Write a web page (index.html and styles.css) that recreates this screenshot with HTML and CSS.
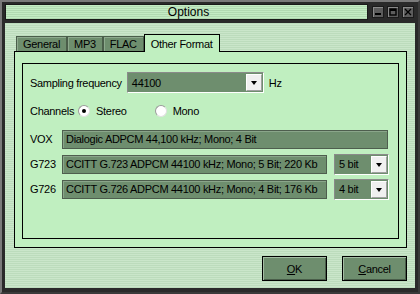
FILE: index.html
```html
<!DOCTYPE html>
<html lang="en">
  <head>
    <meta charset="UTF-8" />
    <title>Options</title>
    <link rel="stylesheet" href="styles.css">
  </head>
  <body>
    <div class="window">
      <div class="titlebar">
        <div class="title">Options</div>
        <div class="ctrls">
          <span class="ctrl"><svg width="8" height="8" viewBox="0 0 8 8"><rect x="1" y="5" width="6" height="2" fill="#000"/></svg></span>
          <span class="ctrl"><svg width="8" height="8" viewBox="0 0 8 8"><rect x="1" y="1" width="6" height="6" fill="none" stroke="#000" stroke-width="1.4"/><rect x="1" y="1" width="6" height="2" fill="#000"/></svg></span>
          <span class="ctrl"><svg width="8" height="8" viewBox="0 0 8 8"><path d="M1 1L7 7M7 1L1 7" stroke="#000" stroke-width="1.3"/></svg></span>
        </div>
      </div>

      <div class="body">
        <div class="tabs">
          <span class="tab">General</span>
          <span class="tab">MP3</span>
          <span class="tab">FLAC</span>
          <span class="tab active">Other Format</span>
        </div>

        <div class="panel">
          <div class="group">
            <div class="row row-freq">
              <span class="lbl">Sampling frequency</span>
              <span class="combo combo-freq">
                <span class="combo-val">44100</span>
                <span class="arrow"></span>
              </span>
              <span class="lbl">Hz</span>
            </div>

            <div class="row row-chan">
              <span class="lbl">Channels</span>
              <span class="radio checked"></span>
              <span class="lbl opt">Stereo</span>
              <span class="radio"></span>
              <span class="lbl">Mono</span>
            </div>

            <div class="row row-fmt">
              <span class="lbl code">VOX</span>
              <span class="field field-wide">Dialogic ADPCM 44,100 kHz; Mono; 4 Bit</span>
            </div>

            <div class="row row-fmt">
              <span class="lbl code">G723</span>
              <span class="field">CCITT G.723 ADPCM 44100 kHz; Mono; 5 Bit; 220 Kb</span>
              <span class="combo combo-bit">
                <span class="combo-val">5 bit</span>
                <span class="arrow"></span>
              </span>
            </div>

            <div class="row row-fmt">
              <span class="lbl code">G726</span>
              <span class="field">CCITT G.726 ADPCM 44100 kHz; Mono; 4 Bit; 176 Kb</span>
              <span class="combo combo-bit">
                <span class="combo-val">4 bit</span>
                <span class="arrow"></span>
              </span>
            </div>
          </div>
        </div>

        <div class="buttons">
          <button><u>O</u>K</button>
          <button><u>C</u>ancel</button>
        </div>
      </div>
    </div>
  </body>
</html>
```

FILE: styles.css
```css
/* General */
body {
  margin: 0;
  background: #1c1c1c;
  font-family: "Liberation Sans", Arial, sans-serif;
  font-size: 11px;
  letter-spacing: -0.3px;
  color: #000;
}

/* Window frame */
.window {
  width: 420px;
  height: 294px;
  box-sizing: border-box;
  border: 2px solid #7a7a7a;
  border-right-color: #3a3a3a;
  border-bottom-color: #3a3a3a;
  background: #2a2a2a;
  padding: 2px 3px 4px 3px;
  display: flex;
  flex-direction: column;
}

/* Title bar */
.titlebar {
  display: flex;
  align-items: center;
  height: 16px;
  gap: 4px;
  margin-bottom: 3px;
}

.title {
  flex: 1;
  height: 16px;
  box-sizing: border-box;
  border: 1px solid #1a1a1a;
  background: repeating-linear-gradient(#c4ecc4 0 1px, #b2dab2 1px 2px);
  text-align: center;
  line-height: 14px;
  font-size: 12px;
  letter-spacing: 0;
  padding-left: 4px;
}

.ctrls {
  display: flex;
  gap: 3px;
  padding-right: 1px;
}

.ctrl {
  width: 12px;
  height: 12px;
  box-sizing: border-box;
  border: 1px solid #1a1a1a;
  background: #5c5c5c;
  box-shadow: inset 1px 1px 0 #8a8a8a;
  display: flex;
  align-items: center;
  justify-content: center;
}

/* Body */
.body {
  flex: 1;
  background: repeating-linear-gradient(#bcdcbc 0 1px, #cae6ca 1px 2px);
  padding: 11px 8px 0 9px;
  display: flex;
  flex-direction: column;
}

/* Tabs */
.tabs {
  display: flex;
  align-items: flex-end;
  padding-left: 2px;
  height: 17px;
}

.tab {
  height: 14px;
  line-height: 15px;
  padding: 0 6px;
  background: #6e8e6e;
  border: 1px solid #4a5e4a;
  border-bottom: none;
  box-shadow: inset 1px 1px 0 #8eaa8e;
}

.tab.active {
  height: 17px;
  line-height: 19px;
  background: #c0efc0;
  border: 1px solid #000;
  border-bottom: none;
  box-shadow: none;
  position: relative;
  top: 1px;
  z-index: 1;
}

.panel {
  height: 197px;
  box-sizing: border-box;
  background: #c0efc0;
  border: 1px solid #000;
  padding: 11px 7px 0 7px;
}

.group {
  height: 176px;
  box-sizing: border-box;
  border: 1px solid #000;
  padding: 8px 0 0 7px;
}

/* Rows */
.row {
  display: flex;
  align-items: center;
}

.row-freq {
  height: 21px;
  gap: 5px;
}

.row-chan {
  height: 16px;
  margin-top: 10px;
}

.row-fmt {
  margin-top: 5px;
  height: 20px;
}

.row-chan + .row-fmt {
  margin-top: 10px;
}

.lbl {
  white-space: nowrap;
}

.code {
  width: 32px;
}

/* Radio buttons */
.radio {
  width: 10px;
  height: 10px;
  border-radius: 50%;
  background: #fff;
  border: 1px solid #9a9a9a;
  border-bottom-color: #e0e0e0;
  border-right-color: #e0e0e0;
  margin: 0 6px 0 4px;
  position: relative;
}

.radio.checked::after {
  content: "";
  position: absolute;
  left: 3px;
  top: 3px;
  width: 4px;
  height: 4px;
  border-radius: 50%;
  background: #000;
}

.opt {
  margin-right: 24px;
}

/* Read-only fields */
.field {
  width: 265px;
  height: 19px;
  box-sizing: border-box;
  background: #6e8e6e;
  border: 1px solid #4e5e4e;
  box-shadow: inset 1px 1px 0 #8aa68a;
  line-height: 17px;
  padding-left: 3px;
  white-space: nowrap;
  overflow: hidden;
}

.field-wide {
  width: 326px;
}

/* Combo boxes */
.combo {
  display: flex;
  align-items: center;
  height: 21px;
  box-sizing: border-box;
  border: 1px solid #fff;
  border-top-color: #8a8a8a;
  border-left-color: #8a8a8a;
  background: #6e8e6e;
  padding: 1px;
}

.combo-freq {
  width: 137px;
}

.combo-bit {
  width: 55px;
  margin-left: 7px;
}

.combo-val {
  flex: 1;
  padding-left: 3px;
}

.arrow {
  width: 16px;
  height: 17px;
  box-sizing: border-box;
  background: #f0f0f0;
  border: 1px solid #a0a0a0;
  border-top-color: #fff;
  border-left-color: #fff;
  position: relative;
}

.arrow::after {
  content: "";
  position: absolute;
  left: 4px;
  top: 6px;
  border-left: 3.5px solid transparent;
  border-right: 3.5px solid transparent;
  border-top: 4px solid #000;
}

/* Buttons */
.buttons {
  display: flex;
  justify-content: flex-end;
  gap: 15px;
  margin-top: 8px;
}

button {
  width: 65px;
  height: 25px;
  background: #6e8e6e;
  border: 1px solid #000;
  box-shadow: inset 1px 1px 0 #a4bca4, inset -1px -1px 0 #4a5e4a;
  font-family: "Liberation Sans", Arial, sans-serif;
  font-size: 11px;
  letter-spacing: -0.3px;
  padding: 0;
  color: #000;
}
```
